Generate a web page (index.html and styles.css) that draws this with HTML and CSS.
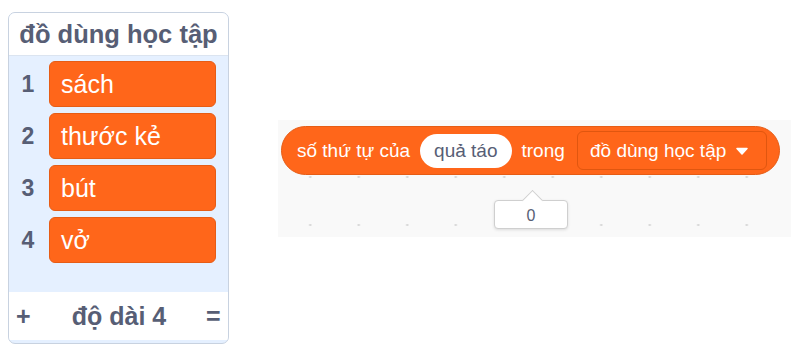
FILE: index.html
```html
<!DOCTYPE html>
<html lang="vi">
<head>
<meta charset="utf-8">
<link rel="stylesheet" href="styles.css">
</head>
<body>
<div class="page">
  <div class="monitor">
    <div class="mon-header">đồ dùng học tập</div>
    <div class="mon-body">
      <div class="rows">
        <div class="row"><span class="idx">1</span><div class="item">sách</div></div>
        <div class="row"><span class="idx">2</span><div class="item">thước kẻ</div></div>
        <div class="row"><span class="idx">3</span><div class="item">bút</div></div>
        <div class="row"><span class="idx">4</span><div class="item">vở</div></div>
      </div>
      <div class="mon-footer">
        <span class="add">+</span>
        <span class="len">độ dài 4</span>
        <span class="resize">=</span>
      </div>
    </div>
  </div>
  <div class="workspace">
    <div class="block">
      <span class="label">số thứ tự của</span>
      <span class="pill">quả táo</span>
      <span class="label">trong</span>
      <span class="dropdown">đồ dùng học tập <svg class="caret" width="12" height="8" viewBox="0 0 12 8"><path d="M1 1.5 L11 1.5 L6 7 Z" fill="#fff" stroke="#fff" stroke-width="1.5" stroke-linejoin="round"/></svg></span>
    </div>
    <div class="bubble"><span class="bubble-text">0</span></div>
  </div>
</div>
</body>
</html>
```

FILE: styles.css
```css
* { box-sizing: border-box; }
html, body { margin: 0; padding: 0; background: #ffffff; }
body { font-family: "Liberation Sans", Arial, Helvetica, sans-serif; }

.page {
  display: flex;
  align-items: flex-start;
  padding: 12px 0 0 8px;
  gap: 49px;
}

.monitor {
  width: 221px;
  height: 332px;
  border: 1px solid #c8d2e0;
  border-radius: 7px;
  background: #e5f0ff;
  display: flex;
  flex-direction: column;
  overflow: hidden;
}

.mon-header {
  height: 43px;
  background: #ffffff;
  border-bottom: 1px solid #dbe4f0;
  color: #575e75;
  font-weight: bold;
  font-size: 25.5px;
  display: flex;
  align-items: center;
  justify-content: center;
  flex-shrink: 0;
  white-space: nowrap;
}

.mon-body {
  flex: 1;
  display: flex;
  flex-direction: column;
  justify-content: space-between;
  padding: 5px 0 3px 0;
}

.rows {
  display: flex;
  flex-direction: column;
  gap: 6px;
  padding-right: 12px;
}

.row {
  display: flex;
  align-items: center;
}

.idx {
  width: 38px;
  text-align: center;
  color: #575e75;
  font-weight: bold;
  font-size: 23px;
}

.item {
  flex: 1;
  margin-left: 2px;
  height: 46px;
  background: #ff661a;
  border: 1px solid #e65c15;
  border-radius: 6px;
  color: #ffffff;
  font-size: 25px;
  display: flex;
  align-items: center;
  padding-left: 11px;
}

.mon-footer {
  height: 48px;
  background: #ffffff;
  display: flex;
  align-items: center;
  justify-content: space-between;
  padding: 0 8px 0 7px;
  color: #575e75;
  font-weight: bold;
}

.add { font-size: 25px; width: 14px; text-align: center; }
.len { font-size: 25px; margin-left: 2px; }
.resize { font-size: 25px; width: 14px; text-align: center; }

.workspace {
  position: relative;
  margin-top: 108px;
  width: 513px;
  height: 117px;
  background-color: #f9f9f9;
  background-image: radial-gradient(circle, #d6d6d6 0.9px, transparent 1.4px);
  background-size: 48.5px 48px;
  background-position: 8px 33px;
  padding: 6px 0 0 3px;
}

.block {
  display: flex;
  align-items: center;
  gap: 10px;
  width: 499px;
  height: 49px;
  background: #ff661a;
  border: 1px solid #e65c15;
  border-radius: 25px;
  padding: 0 12px 0 15px;
  color: #ffffff;
  font-size: 19px;
}

.label { white-space: nowrap; }

.pill {
  height: 34px;
  background: #ffffff;
  border-radius: 17px;
  color: #575e75;
  padding: 0 14px;
  display: flex;
  align-items: center;
  white-space: nowrap;
}

.dropdown {
  margin-left: auto;
  width: 190px;
  height: 39px;
  border: 1px solid #e0560f;
  border-radius: 6px;
  background: #ff661a;
  display: flex;
  align-items: center;
  padding-left: 12px;
  gap: 10px;
  white-space: nowrap;
}

.caret { margin-top: 1px; }

.bubble {
  position: absolute;
  left: 216px;
  top: 80px;
  width: 74px;
  height: 29px;
  background: #ffffff;
  border: 1px solid #cfcfcf;
  border-radius: 4px;
  box-shadow: 0 1px 3px rgba(0,0,0,0.12);
  color: #575e75;
  font-size: 16px;
  display: flex;
  align-items: center;
  justify-content: center;
}

.bubble::before {
  content: "";
  position: absolute;
  left: 30px;
  top: -8px;
  width: 14px;
  height: 14px;
  background: #ffffff;
  border-left: 1px solid #cfcfcf;
  border-top: 1px solid #cfcfcf;
  transform: rotate(45deg);
}

.bubble-text {
  position: relative;
  margin-top: 2px;
}
```
